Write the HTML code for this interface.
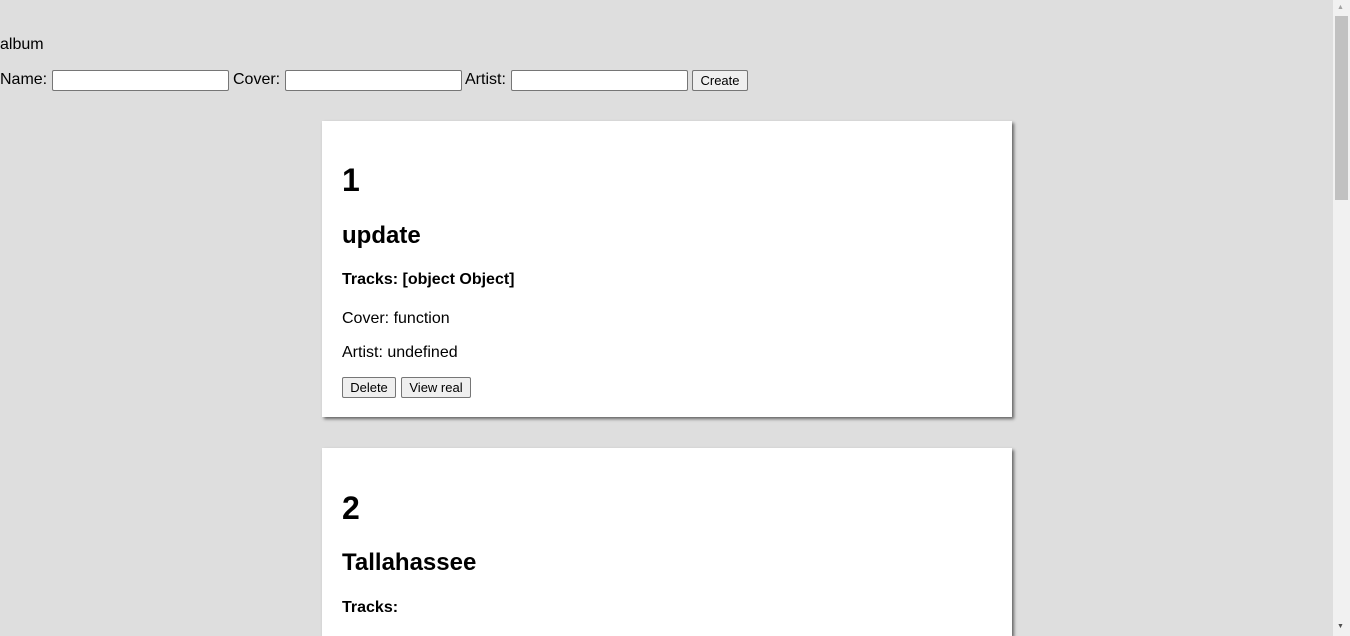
<!DOCTYPE html>
<html style="overflow:hidden;height:636px"><head><style>
body{margin:0;width:1350px;height:636px;background:#dedede;font-family:"Liberation Sans",Arial,sans-serif;overflow:hidden;position:relative;color:#000}
.a{position:absolute;white-space:nowrap;line-height:1}
.inp{position:absolute;top:70px;height:19px;width:175px;background:#fff;border:1px solid #767676;border-radius:2px}
.btn{position:absolute;height:19px;background:#efefef;border:1px solid #767676;border-radius:2px;font-size:13px;line-height:19px;text-align:center;box-sizing:content-box}
.card{position:absolute;left:322px;width:690px;background:#fff;box-shadow:2px 2px 3px rgba(0,0,0,.55)}
</style></head><body>
<div class="a" style="left:0;top:37px;font-size:16px">album</div>
<div class="a" style="left:0;top:72px;font-size:16px">Name:</div>
<div class="inp" style="left:52px"></div>
<div class="a" style="left:233px;top:72px;font-size:16px">Cover:</div>
<div class="inp" style="left:285px"></div>
<div class="a" style="left:465px;top:72px;font-size:16px">Artist:</div>
<div class="inp" style="left:511px"></div>
<div class="btn" style="left:692px;top:70px;width:54px">Create</div>

<div class="card" style="top:121px;height:296px"></div>
<div class="a" style="left:342px;top:164px;font-size:32px;font-weight:bold">1</div>
<div class="a" style="left:342px;top:224px;font-size:24px;font-weight:bold">update</div>
<div class="a" style="left:342px;top:272px;font-size:16px;font-weight:bold">Tracks: [object Object]</div>
<div class="a" style="left:342px;top:311px;font-size:16px">Cover: function</div>
<div class="a" style="left:342px;top:345px;font-size:16px">Artist: undefined</div>
<div class="btn" style="left:342px;top:377px;width:52px">Delete</div>
<div class="btn" style="left:401px;top:377px;width:68px">View real</div>

<div class="card" style="top:448px;height:188px"></div>
<div class="a" style="left:342px;top:492px;font-size:32px;font-weight:bold">2</div>
<div class="a" style="left:342px;top:551px;font-size:24px;font-weight:bold">Tallahassee</div>
<div class="a" style="left:342px;top:600px;font-size:16px;font-weight:bold">Tracks:</div>

<div style="position:absolute;left:1333px;top:0;width:17px;height:636px;background:#f1f1f1"></div>
<div style="position:absolute;left:1335px;top:16px;width:13px;height:184px;background:#c1c1c1"></div>
<div class="a" style="left:1337px;top:4px;font-size:7px;color:#a3a3a3">▲</div>
<div class="a" style="left:1337px;top:623px;font-size:7px;color:#505050">▼</div>
</body></html>
